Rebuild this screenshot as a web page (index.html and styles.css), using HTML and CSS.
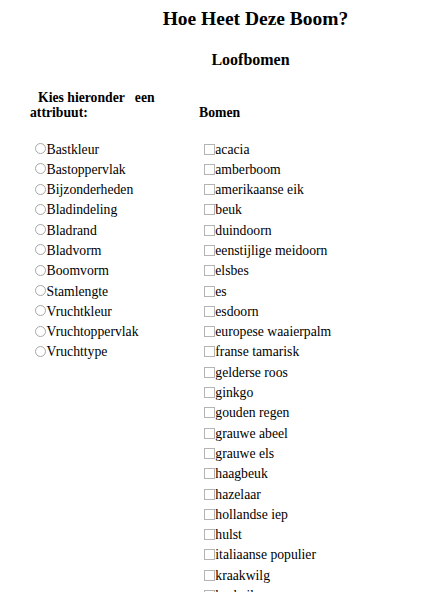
FILE: index.html
```html
<!DOCTYPE html>
<html lang="nl">
<head>
<meta charset="utf-8">
<title>Hoe Heet Deze Boom?</title>
<link rel="stylesheet" href="styles.css">
</head>
<body>
<h1 class="title">Hoe Heet Deze Boom?</h1>
<h2 class="subtitle">Loofbomen</h2>
<form class="chooser">
  <div class="col-head attr-head">Kies hieronder &nbsp; een attribuut:</div>
  <div class="col-head">Bomen</div>
  <ul class="options">
    <li><label><input class="choice radio" type="radio" name="attr">Bastkleur</label></li>
    <li><label><input class="choice radio" type="radio" name="attr">Bastoppervlak</label></li>
    <li><label><input class="choice radio" type="radio" name="attr">Bijzonderheden</label></li>
    <li><label><input class="choice radio" type="radio" name="attr">Bladindeling</label></li>
    <li><label><input class="choice radio" type="radio" name="attr">Bladrand</label></li>
    <li><label><input class="choice radio" type="radio" name="attr">Bladvorm</label></li>
    <li><label><input class="choice radio" type="radio" name="attr">Boomvorm</label></li>
    <li><label><input class="choice radio" type="radio" name="attr">Stamlengte</label></li>
    <li><label><input class="choice radio" type="radio" name="attr">Vruchtkleur</label></li>
    <li><label><input class="choice radio" type="radio" name="attr">Vruchtoppervlak</label></li>
    <li><label><input class="choice radio" type="radio" name="attr">Vruchttype</label></li>
  </ul>
  <ul class="options">
    <li><label><input class="choice check" type="checkbox">acacia</label></li>
    <li><label><input class="choice check" type="checkbox">amberboom</label></li>
    <li><label><input class="choice check" type="checkbox">amerikaanse eik</label></li>
    <li><label><input class="choice check" type="checkbox">beuk</label></li>
    <li><label><input class="choice check" type="checkbox">duindoorn</label></li>
    <li><label><input class="choice check" type="checkbox">eenstijlige meidoorn</label></li>
    <li><label><input class="choice check" type="checkbox">elsbes</label></li>
    <li><label><input class="choice check" type="checkbox">es</label></li>
    <li><label><input class="choice check" type="checkbox">esdoorn</label></li>
    <li><label><input class="choice check" type="checkbox">europese waaierpalm</label></li>
    <li><label><input class="choice check" type="checkbox">franse tamarisk</label></li>
    <li><label><input class="choice check" type="checkbox">gelderse roos</label></li>
    <li><label><input class="choice check" type="checkbox">ginkgo</label></li>
    <li><label><input class="choice check" type="checkbox">gouden regen</label></li>
    <li><label><input class="choice check" type="checkbox">grauwe abeel</label></li>
    <li><label><input class="choice check" type="checkbox">grauwe els</label></li>
    <li><label><input class="choice check" type="checkbox">haagbeuk</label></li>
    <li><label><input class="choice check" type="checkbox">hazelaar</label></li>
    <li><label><input class="choice check" type="checkbox">hollandse iep</label></li>
    <li><label><input class="choice check" type="checkbox">hulst</label></li>
    <li><label><input class="choice check" type="checkbox">italiaanse populier</label></li>
    <li><label><input class="choice check" type="checkbox">kraakwilg</label></li>
    <li><label><input class="choice check" type="checkbox">kurkeik</label></li>
  </ul>
</form>
</body>
</html>
```

FILE: styles.css
```css
html, body {
  margin: 0;
  padding: 0;
  background: #fff;
}

body {
  font-family: "Liberation Serif", "Times New Roman", serif;
  font-size: 13.7px;
  color: #000;
}

.title {
  margin: 8px 0 0;
  padding-left: 87px;
  text-align: center;
  font-size: 19.5px;
  line-height: 1.15;
  font-weight: bold;
}

.subtitle {
  margin: 20.5px 0 0;
  padding-left: 77px;
  text-align: center;
  font-size: 16px;
  line-height: 1.15;
  font-weight: bold;
}

.chooser {
  display: grid;
  grid-template-columns: 169px 1fr;
  align-items: end;
  margin: 20.7px 0 0;
  padding-left: 30px;
}

.col-head {
  font-weight: bold;
  line-height: 15px;
}

.attr-head {
  width: 140px;
  text-indent: 8px;
}

.options {
  align-self: start;
  list-style: none;
  margin: 19.5px 0 0;
  padding: 0;
  line-height: 20.3px;
  white-space: nowrap;
}

.choice {
  -webkit-appearance: none;
  appearance: none;
  box-sizing: border-box;
  width: 11px;
  height: 11px;
  margin: 0 0.6px 0 0;
  padding: 0;
  background: #fff;
}

.radio {
  margin-left: 5px;
  border: 1px solid #a8a8a8;
  border-radius: 50%;
  vertical-align: -0.5px;
}

.check {
  margin-left: 4.7px;
  border: 1px solid #b4b4b4;
  border-radius: 0;
  vertical-align: -1px;
}
```
